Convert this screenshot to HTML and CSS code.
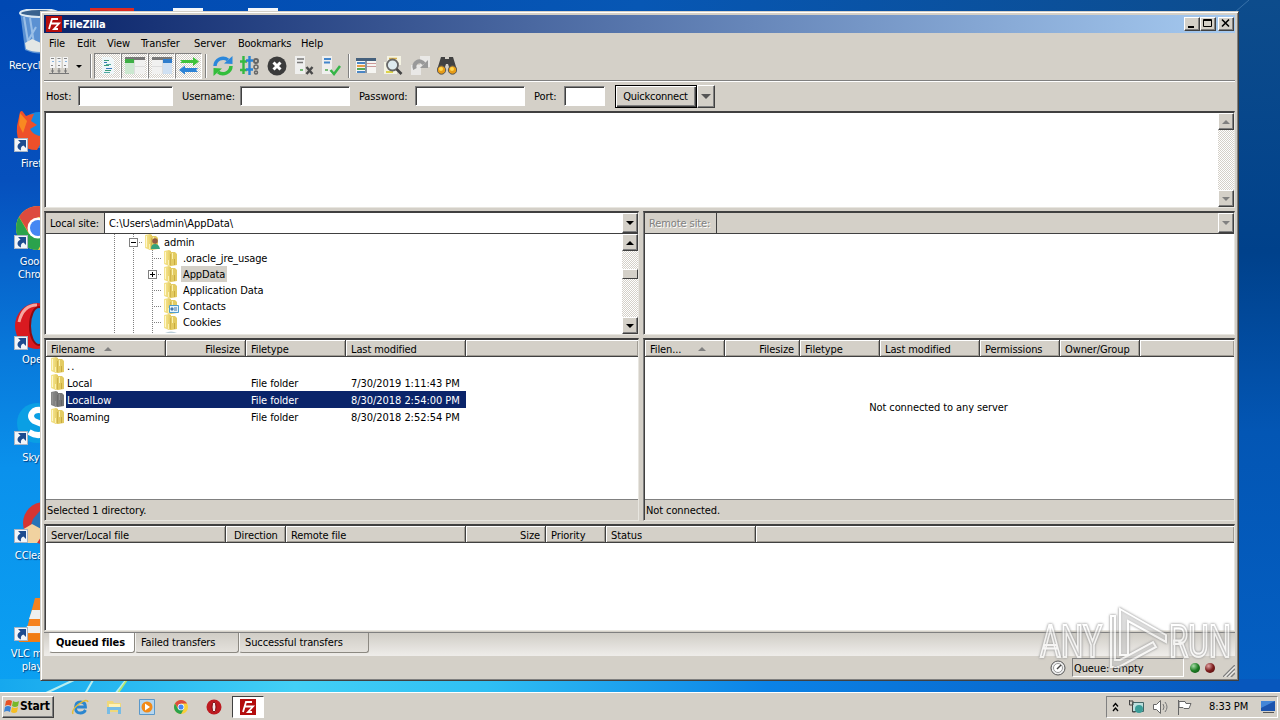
FILE: index.html
```html
<!DOCTYPE html>
<html lang="en">

<head>
  <meta charset="utf-8">
  <title>FileZilla</title>
  <link rel="stylesheet" href="styles.css">
</head>

<body>

<svg class="defs">
  <linearGradient id="fold" x1="0" x2="1">
    <stop offset="0" stop-color="#f6e693"/>
    <stop offset=".5" stop-color="#efdb7c"/>
    <stop offset="1" stop-color="#e0c65a"/>
  </linearGradient>
  <symbol id="folder" viewBox="0 0 16 16">
    <path d="M1 1l5-1 2 1v14l-2 1-5-2z" fill="url(#fold)"/>
    <path d="M7 2h5l2 2v11l-6 1H7z" fill="#e3cb62"/>
    <path d="M2.500 2v11" stroke="#fff7cd"/>
    <path d="M7.500 4v11" stroke="#d0b44c"/>
    <path d="M9.500 3v6M5.500 10v5" stroke="#fbf1b2"/>
    <path d="M11.500 9v6" stroke="#c9ab40"/>
  </symbol>
  <symbol id="fz" viewBox="0 0 16 16">
    <path d="M0 0h16v16H0z" fill="#b30d0d"/>
    <path d="M3 13L6 3h6M5 7.500h4M9 7.500h4l-5 5.500h4" fill="none" stroke="#fff" stroke-width="1.800"/>
  </symbol>
  <symbol id="chrome" viewBox="0 0 44 44">
    <circle cx="22" cy="22" r="22" fill="#f9cf3a"/>
    <path d="M3 11a22 22 0 0 1 38 0H22L13 27z" fill="#dd4b3e"/>
    <path d="M3 11a22 22 0 0 0 19 33l9-16H13z" fill="#2ba24c"/>
    <circle cx="22" cy="22" r="10.500" fill="#fff"/>
    <circle cx="22" cy="22" r="8" fill="#4587f3"/>
  </symbol>
  <symbol id="shortcut" viewBox="0 0 14 14">
    <path d="M0 0h14v14H0z" fill="#f2f5f9"/>
    <path d="M0 .5h14M.5 0v14M13.500 0v14M0 13.500h14" stroke="#a9b4c4"/>
    <path d="M4 2h8v8L9.500 7.500C7 8.500 6.500 10 7 12.500 3 11 2 7 6.500 4.500z" fill="#1d4b8f"/>
  </symbol>
</svg>

<div class="desktop">
  <svg class="wallpaper" viewBox="0 0 1280 720">
    <path d="M44 694l30-14M85 694l8-14M115 694l11-14" stroke="#b6edf0" stroke-width="2"/>
    <path d="M118 693l9-13" stroke="#b6e86a" stroke-width="1.500"/>
    <path d="M1235 12l14-12" stroke="#3972a9"/>
    <path d="M90 8h44v4H90z" fill="#dc2b22"/>
    <path d="M173 8h30v4h-30zM248 8h30v4h-30z" fill="#f4f6fa"/>
  </svg>

  <div class="shortcut bin">
    <svg width="44" height="46" viewBox="0 0 44 46">
      <path d="M1 2l5 39q16 7 28 0l5-39z" fill="#7aa9dc" opacity=".75"/>
      <path d="M5 8l5 31M11 9l5 32M17 18l-8 14" stroke="#c5dff5" stroke-width="2" opacity=".6"/>
      <ellipse cx="20" cy="4" rx="19" ry="4" fill="#39628f" stroke="#dce9f3" stroke-width="2"/>
      <path d="M6 34l7-4 9 4v9q-10 0-15-3z" fill="#e3e7e5"/>
    </svg>
    <span>Recycle Bin</span>
  </div>
  <div class="shortcut firefox">
    <svg width="46" height="46" viewBox="0 0 46 46">
      <circle cx="24" cy="22" r="18" fill="#1587df"/>
      <path d="M5 4q2-2 3 0l3 4q4-2 8-2l-3 7 6 4-7 4q4 8 15 7l-8 14Q0 42 2 18z" fill="#ee502a"/>
      <path d="M5 5l7 8-4 12-4-8z" fill="#f98921"/>
    </svg>
    <svg class="link"><use href="#shortcut"/></svg>
    <span>Firefox</span>
  </div>
  <div class="shortcut google">
    <svg width="46" height="46" viewBox="-1 -1 46 46"><use href="#chrome" width="44" height="44"/></svg>
    <svg class="link"><use href="#shortcut"/></svg>
    <span>Google<br>Chrome</span>
  </div>
  <div class="shortcut opera">
    <svg width="46" height="48" viewBox="0 0 46 48">
      <ellipse cx="22" cy="24" rx="22" ry="23" fill="#d91a20"/>
      <path d="M4 20Q8 3 22 3" fill="none" stroke="#f5a7a0" stroke-width="3"/>
      <ellipse cx="24" cy="24" rx="9" ry="19" fill="#118cdf" stroke="#8d0a10" stroke-width="2"/>
    </svg>
    <svg class="link"><use href="#shortcut"/></svg>
    <span>Opera</span>
  </div>
  <div class="shortcut skype">
    <svg width="46" height="46" viewBox="0 0 46 46">
      <circle cx="22" cy="22" r="20" fill="#0a9fe4"/>
      <path d="M33 12q-8-5-14-2-6 5 0 10l10 4q6 5-1 9-6 3-14-2" fill="none" stroke="#fff" stroke-width="6"/>
    </svg>
    <svg class="link"><use href="#shortcut"/></svg>
    <span>Skype</span>
  </div>
  <div class="shortcut ccleaner">
    <svg width="46" height="46" viewBox="0 0 46 46">
      <circle cx="29" cy="24" r="21" fill="#d53532"/>
      <path d="M18 20l12-14v26l-14-6z" fill="#2873b7"/>
      <path d="M2 34l15-9 13 7-8 12H8z" fill="#f1d2a0"/>
    </svg>
    <svg class="link"><use href="#shortcut"/></svg>
    <span>CCleaner</span>
  </div>
  <div class="shortcut vlc">
    <svg width="46" height="46" viewBox="0 0 46 46">
      <path d="M20 1h6l13 41H9z" fill="#f5821f"/>
      <path d="M17 13h12l3 9H14zM12 29h22l2 7H9z" fill="#eef0f0"/>
      <path d="M4 37h38v8H4z" fill="#f07c14"/>
    </svg>
    <svg class="link"><use href="#shortcut"/></svg>
    <span>VLC media<br>player</span>
  </div>

  <div class="window">
    <div class="titlebar">
      <svg width="16" height="16"><use href="#fz"/></svg>
      <span class="caption">FileZilla</span>
      <div class="win-btn"><svg width="14" height="12"><path d="M3 8h6v2H3z"/></svg></div>
      <div class="win-btn"><svg width="14" height="12"><path d="M2.500 1.500h8v7h-8zM2 2.500h9" fill="none" stroke="#000"/></svg></div>
      <div class="win-btn close"><svg width="14" height="12"><path d="M3 1.500l7 7M10 1.500l-7 7" stroke="#000" stroke-width="1.600"/></svg></div>
    </div>

    <div class="menu">
      <span class="m-file">File</span>
      <span class="m-edit">Edit</span>
      <span class="m-view">View</span>
      <span class="m-transfer">Transfer</span>
      <span class="m-server">Server</span>
      <span class="m-book">Bookmarks</span>
      <span class="m-help">Help</span>
    </div>

    <div class="toolbar">
      <div class="tool">
        <svg width="20" height="20">
          <path d="M1 1h5v11H1zM7.500 1h5v11h-5zM14 1h5v11h-5z" fill="#f4f4f4"/>
          <path d="M2 2.500h3M8.500 2.500h3M15 2.500h3M2 9.500h2M9 9.500h2M15 9.500h2" stroke="#888"/>
          <path d="M3 5.500h2M9.500 5.500h2M16 5.500h2" stroke="#8ab5dc"/>
          <path d="M3.500 12v5M10 12v5M16.500 12v5M0 17.500h20M2 15h3M8.500 15h3M15 15h3" stroke="#777"/>
        </svg>
      </div>
      <i class="drop"></i>
      <i class="sep"></i>
      <div class="tool on">
        <svg width="20" height="20"><path d="M4 1h9l3 3v14H4z" fill="#eef6f8"/><path d="M6 4.500h5M6 9.500h5M7 14.500h6" stroke="#3c9b78"/><path d="M6 6.500h3M8 12.500h6" stroke="#3977b9"/><path d="M8 8.500h5M6 16.500h6" stroke="#50a8a0"/></svg>
      </div>
      <div class="tool on">
        <svg width="20" height="20"><path d="M0 1h20v17H0z" fill="#f1f1f0"/><path d="M0 1h20v3H0z" fill="#777"/><path d="M0 3h9v4H0z" fill="#3daf45"/><path d="M0 7h9v11H0z" fill="#cbe8cf"/><path d="M9.500 4v14M9 10.500h11" stroke="#ddd"/></svg>
      </div>
      <div class="tool on">
        <svg width="20" height="20"><path d="M0 1h20v17H0z" fill="#f1f1f0"/><path d="M0 1h20v3H0z" fill="#777"/><path d="M11 3h9v4h-9z" fill="#2f7dcc"/><path d="M11 7h9v11h-9z" fill="#cfe0f2"/><path d="M10.500 4v14M0 10.500h11" stroke="#ddd"/></svg>
      </div>
      <div class="tool on">
        <svg width="20" height="20"><path d="M1 4h13V1l6 4.500-6 4.500V7H1l2-1.500z" fill="#3fc33b"/><path d="M19 12H6V9.500L0 14l6 4.500V16h13l-2-2z" fill="#2c83d6"/></svg>
      </div>
      <i class="sep after-toggles"></i>
      <div class="tool">
        <svg width="20" height="20"><path d="M2 10a8 8 0 0 1 13-6" fill="none" stroke="#2b87db" stroke-width="3.500"/><path d="M11 7.500L19.500 8V0z" fill="#2b87db"/><path d="M18 10a8 8 0 0 1-13 6" fill="none" stroke="#34be3c" stroke-width="3.500"/><path d="M9 12.500L.5 12v8z" fill="#34be3c"/></svg>
      </div>
      <div class="tool">
        <svg width="20" height="20"><path d="M3.500 0v18M0 5.500h7M0 14h7" stroke="#35b942" stroke-width="2.400"/><path d="M9.500 0v19M6 4.500h7M6 13.500h7" stroke="#2984d5" stroke-width="2.400"/><circle cx="16" cy="5" r="2" fill="none" stroke="#666" stroke-width="2"/><circle cx="16" cy="11" r="2" fill="none" stroke="#666" stroke-width="1.500"/><circle cx="16" cy="16.500" r="1.500" fill="none" stroke="#666" stroke-width="1.500"/></svg>
      </div>
      <div class="tool">
        <svg width="20" height="20"><circle cx="10" cy="10" r="9.500" fill="#3b3b3b"/><path d="M6.500 6.500l7 7M13.500 6.500l-7 7" stroke="#fff" stroke-width="3"/></svg>
      </div>
      <div class="tool">
        <svg width="20" height="20"><path d="M1 0h10v18H1z" fill="#efefee"/><path d="M3 3h7M3 6.500h6" stroke="#777" stroke-width="1.500"/><path d="M6 14h3" stroke="#7b7" stroke-width="2"/><path d="M12.500 11l6 7M18.500 11l-6 7" stroke="#4a4a4a" stroke-width="2.400"/></svg>
      </div>
      <div class="tool">
        <svg width="20" height="20"><path d="M1 0h10v18H1z" fill="#efefee"/><path d="M3 3h7M3 6.500h6" stroke="#4386cc" stroke-width="1.800"/><path d="M4 14h3" stroke="#7b7" stroke-width="2"/><path d="M9.500 14l3.500 4 6-8" fill="none" stroke="#35b548" stroke-width="2.500"/></svg>
      </div>
      <i class="sep before-filters"></i>
      <div class="tool">
        <svg width="20" height="20"><path d="M0 3h20v14H0z" fill="#f5f5f2"/><path d="M0 2h20v3H0z" fill="#45607c"/><path d="M1 7h8M1 16h8" stroke="#4a86c5" stroke-width="2"/><path d="M1 10h8" stroke="#e69c46" stroke-width="2"/><path d="M1 13h8" stroke="#54aa5a" stroke-width="2"/><path d="M11 7.500h9M11 10.500h9" stroke="#c99"/><path d="M10 5v12" stroke="#61758a" stroke-width="1.500"/></svg>
      </div>
      <div class="tool">
        <svg width="20" height="20"><path d="M4 0h14v9H4zM1 6h13v12H1z" fill="#f4f3e3"/><path d="M3 16h7" stroke="#ddd34b" stroke-width="2"/><path d="M6 2.500h8" stroke="#d8b14d" stroke-width="1.500"/><circle cx="9.500" cy="9" r="5.500" fill="#deebef" stroke="#666" stroke-width="1.800"/><path d="M13.500 13l5 5" stroke="#444" stroke-width="2.600"/></svg>
      </div>
      <div class="tool">
        <svg width="20" height="20"><path d="M10 0h10v11H10zM1 9h10v10H1z" fill="#e9e8e6"/><path d="M5 13a5 5 0 0 1 9-5" fill="none" stroke="#999" stroke-width="4"/><path d="M10 12h8V4z" fill="#999"/></svg>
      </div>
      <div class="tool">
        <svg width="20" height="20"><path d="M4 1h4v2h4V1h4l4 13h-7l-2-6H9l-2 6H0z" fill="#414141"/><circle cx="4.500" cy="14" r="4.200" fill="#e69b16" stroke="#555"/><circle cx="15.500" cy="14" r="4.200" fill="#e69b16" stroke="#555"/><circle cx="4" cy="13" r="2" fill="#ffd650"/><circle cx="15" cy="13" r="2" fill="#ffd650"/></svg>
      </div>
    </div>

    <div class="quickbar">
      <label class="q-host">Host:</label><i class="field"></i>
      <label class="q-user">Username:</label><i class="field wide"></i>
      <label class="q-pass">Password:</label><i class="field wide"></i>
      <label class="q-port">Port:</label><i class="field port"></i>
      <div class="quick">Quickconnect</div>
      <div class="quick-drop"><i class="down gray"></i></div>
    </div>

    <div class="log sunken">
      <div class="scroll">
        <div class="btn"><i class="up gray"></i></div>
        <div class="track"></div>
        <div class="btn"><i class="down gray"></i></div>
      </div>
    </div>

    <div class="split sites">
      <div class="pane local sunken">
        <div class="site">
          <span class="site-label">Local site:</span>
          <span class="path">C:\Users\admin\AppData\</span>
          <div class="btn"><i class="down"></i></div>
        </div>
        <div class="tree-box">
          <ul class="tree">
            <li><i class="guide"></i><i class="guide dots"><b class="box"></b></i><svg class="folder"><use href="#folder"/><circle cx="11" cy="7" r="2.800" fill="#935b43"/><path d="M7 15q0-5 4-5t5 5z" fill="#37a27c"/></svg><span>admin</span></li>
            <li><i class="guide"></i><i class="guide"></i><i class="guide dots"></i><svg class="folder"><use href="#folder"/></svg><span>.oracle_jre_usage</span></li>
            <li><i class="guide"></i><i class="guide"></i><i class="guide dots"><b class="box plus"></b></i><svg class="folder"><use href="#folder"/></svg><span class="picked">AppData</span></li>
            <li><i class="guide"></i><i class="guide"></i><i class="guide dots"></i><svg class="folder"><use href="#folder"/></svg><span>Application Data</span></li>
            <li><i class="guide"></i><i class="guide"></i><i class="guide dots"></i><svg class="folder"><use href="#folder"/><path d="M6.500 7.500h9v7h-9z" fill="#e6f3fb" stroke="#4d9dce"/><path d="M8 10h2v2H8zM11 10h3M11 12h3" fill="#4579ac" stroke="#4579ac"/></svg><span>Contacts</span></li>
            <li><i class="guide"></i><i class="guide"></i><i class="guide dots"></i><svg class="folder"><use href="#folder"/></svg><span>Cookies</span></li>
            <li><i class="guide"></i><i class="guide"></i><i class="guide"></i><svg class="folder"><path d="M2 3q6-3 12 0z" fill="#b9cdd8"/></svg></li>
          </ul>
          <div class="scroll">
            <div class="btn"><i class="up"></i></div>
            <div class="track"><div class="thumb"></div></div>
            <div class="btn"><i class="down"></i></div>
          </div>
        </div>
      </div>
      <div class="pane remote sunken">
        <div class="site off">
          <span class="site-label">Remote site:</span>
          <span class="path"></span>
          <div class="btn"><i class="down gray"></i></div>
        </div>
      </div>
    </div>

    <div class="split lists">
      <div class="pane local sunken">
        <div class="head local-cols">
          <span>Filename<i class="up sort"></i></span>
          <span class="num">Filesize</span>
          <span>Filetype</span>
          <span>Last modified</span>
          <span class="rest"></span>
        </div>
        <div class="rows">
          <div class="row local-cols"><span class="name"><svg class="folder"><use href="#folder"/></svg><em class="parent">..</em></span></div>
          <div class="row local-cols"><span class="name"><svg class="folder"><use href="#folder"/></svg><em>Local</em></span><span></span><span>File folder</span><span class="date">7/30/2019 1:11:43 PM</span></div>
          <div class="row local-cols selected"><span class="name"><svg class="folder"><use href="#folder"/></svg><em>LocalLow</em></span><span></span><span>File folder</span><span class="date">8/30/2018 2:54:00 PM</span></div>
          <div class="row local-cols"><span class="name"><svg class="folder"><use href="#folder"/></svg><em>Roaming</em></span><span></span><span>File folder</span><span class="date">8/30/2018 2:52:54 PM</span></div>
        </div>
        <div class="pane-status">Selected 1 directory.</div>
      </div>
      <div class="pane remote sunken">
        <div class="head remote-cols">
          <span>Filen...<i class="up sort"></i></span>
          <span class="num">Filesize</span>
          <span>Filetype</span>
          <span>Last modified</span>
          <span>Permissions</span>
          <span>Owner/Group</span>
          <span class="rest"></span>
        </div>
        <div class="rows empty"><span>Not connected to any server</span></div>
        <div class="pane-status">Not connected.</div>
      </div>
    </div>

    <div class="queue sunken">
      <div class="head queue-cols">
        <span>Server/Local file</span>
        <span class="dir">Direction</span>
        <span>Remote file</span>
        <span class="num">Size</span>
        <span>Priority</span>
        <span>Status</span>
        <span class="rest"></span>
      </div>
    </div>

    <div class="tabs">
      <div class="tab active"><span>Queued files</span></div>
      <div class="tab failed"><span>Failed transfers</span></div>
      <div class="tab success"><span>Successful transfers</span></div>
    </div>

    <div class="statusbar">
      <svg width="16" height="16"><circle cx="8" cy="8" r="7" fill="#eee" stroke="#555"/><circle cx="8" cy="8" r="4.500" fill="#fff" stroke="#999"/><path d="M7 9l4-4" stroke="#444" stroke-width="1.500"/></svg>
      <div class="queue-size">Queue: empty</div>
      <i class="led green"></i>
      <i class="led red"></i>
      <svg class="grip" width="12" height="12"><path d="M0 12L12 0M4 12l8-8M8 12l4-4" stroke="#808080" stroke-width="1.500"/><path d="M1.500 12L12 1.500M5.500 12L12 5.500" stroke="#fff"/></svg>
    </div>
  </div>

  <svg class="watermark" width="204" height="64" viewBox="0 0 204 64">
    <g fill="#fff" fill-opacity=".35" stroke="#fff" stroke-width="2">
      <text x="1" y="51" textLength="62" lengthAdjust="spacingAndGlyphs">ANY</text>
      <text x="130" y="51" textLength="62" lengthAdjust="spacingAndGlyphs">RUN</text>
      <path d="M81 3l46 26v7l-38-21v34h-8z"/>
      <path d="M76 10h-4v51h8l37-20-3-5-33 18h-5z"/>
    </g>
  </svg>

  <div class="taskbar">
    <div class="start">
      <svg width="16" height="15"><path d="M2 2q3-2 6 0L7 7Q4 5 1 7z" fill="#e75125"/><path d="M9 2q3 2 6 0l-1 5q-3 2-6 0z" fill="#78b82b"/><path d="M1 8q3-2 6 0l-1 5q-3-2-6 0z" fill="#3b83d5"/><path d="M8 8q3 2 6 0l-1 5q-3 2-6 0z" fill="#f6be23"/></svg>
      Start
    </div>
    <div class="pinned">
      <svg width="18" height="18"><path d="M14.500 12Q13 15 9.500 15q-5 0-5-5.500t5-5.500 5 5H5" fill="none" stroke="#2b86cf" stroke-width="2.800"/><path d="M2 16Q0 12 8 6t9-2" fill="none" stroke="#e5bd37" stroke-width="1.500"/></svg>
      <svg width="18" height="18"><path d="M2 3h6l1 2h7v9H2z" fill="#efd87b"/><path d="M4 6h11v6H4z" fill="#fff2b5"/><path d="M2 9h14v7h-3v-4H5v4H2z" fill="#77bce5"/></svg>
      <svg width="18" height="18"><path d="M1.500 1.500h15v15h-15z" fill="#b6d6ef" stroke="#5a98ca"/><circle cx="9" cy="9" r="5.500" fill="#f28a18"/><path d="M7 5.500l5 3.500-5 3.500z" fill="#fff"/></svg>
      <svg width="18" height="18"><use href="#chrome" x="2" y="2" width="14" height="14"/></svg>
      <svg width="18" height="18"><circle cx="9" cy="9" r="7.500" fill="#bd1a20"/><ellipse cx="9" cy="9" rx="2" ry="5" fill="#f5e8e8" stroke="#7a080c"/></svg>
    </div>
    <div class="task"><svg width="16" height="16"><use href="#fz"/></svg></div>
    <div class="tray">
      <svg class="chev" width="8" height="10"><path d="M1 4.500l2.500-3L6 4.500M1 9l2.500-3L6 9" fill="none" stroke="#000" stroke-width="1.300"/></svg>
      <svg class="net" width="18" height="18"><path d="M4.500 4.500h11v9h-11z" fill="#bce0df" stroke="#466"/><circle cx="11" cy="11" r="4" fill="#3a9d98"/><path d="M1 3h4v4M1.500 2v5h3v7h3" fill="none" stroke="#444"/></svg>
      <svg class="vol" width="18" height="18"><path d="M1.500 6.500h3l4-4v13l-4-4h-3z" fill="#fff" stroke="#666"/><path d="M11 6q2 3 0 6M13 4q4 5 0 10" fill="none" stroke="#777"/></svg>
      <svg class="flag" width="18" height="18"><path d="M2.500 2v15M3 3.500h6l1 2h5l-2 5H8l-1-1H3z" fill="#fff" stroke="#666"/></svg>
      <span class="clock">8:33 PM</span>
      <svg class="show" width="16" height="16"><path d="M1 2h14v10H1z" fill="#1b54ae"/><path d="M1 2h14L1 9z" fill="#4386d8"/><path d="M3 13h11v1H3z" fill="#555"/></svg>
    </div>
  </div>
</div>

</body>

</html>
```
FILE: styles.css
```css
body {
  margin: 0;
  font: 11px/13px "DejaVu Sans Condensed", "DejaVu Sans", sans-serif;
  font-stretch: condensed;
  letter-spacing: -0.1px;
  color: #000;
}

svg {
  display: block;
  flex: none;
}

i, em {
  font-style: normal;
}

.defs {
  position: absolute;
  width: 0;
  height: 0;
}

.desktop {
  position: relative;
  width: 1280px;
  height: 720px;
  overflow: hidden;
  background:
    linear-gradient(90deg, #16a8ee, #43d0f5 23%, #2fbff4 38%, #0b82e6 60%, #0757bd 97%) 0 100% / 100% 41px no-repeat,
    linear-gradient(#0d4c8c, #00418b 35%, #0356b4 60%, #0460c5) 100% 0 / 60px 100% no-repeat,
    linear-gradient(90deg, #0048b3, #0757b4 50%, #0d4c8c) 0 0 / 100% 12px no-repeat,
    linear-gradient(#0048b3, #0650bd 25%, #0877d9 48%, #0a91ec 65%, #0ba3f3);
}

.wallpaper {
  position: absolute;
  left: 0;
  top: 0;
  width: 1280px;
  height: 720px;
}

/* desktop shortcuts */

.shortcut {
  position: absolute;
  left: 0;
  width: 74px;
  color: #fff;
  text-align: center;
  text-shadow: 1px 1px 1px #033a7a;
}

.shortcut > svg:first-child {
  margin-left: 15px;
}

.shortcut span {
  display: block;
  margin-top: 3px;
  white-space: nowrap;
}

.shortcut .link {
  position: absolute;
  left: 14px;
  top: 30px;
  width: 14px;
  height: 14px;
}

.bin {
  top: 9px;
}

.bin > svg:first-child {
  margin-left: 19px;
}

.bin span {
  margin-top: 4px;
}

.firefox {
  top: 108px;
}

.google {
  top: 205px;
}

.google span {
  margin-top: 4px;
}

.opera {
  top: 302px;
}

.opera .link {
  top: 34px;
}

.skype {
  top: 401px;
}

.ccleaner {
  top: 499px;
}

.vlc {
  top: 597px;
}

.skype span, .ccleaner span, .vlc span {
  margin-top: 4px;
}

/* window */

.window {
  position: absolute;
  left: 40px;
  top: 11px;
  width: 1191px;
  height: 664px;
  padding: 3px 3px 1px;
  display: flex;
  flex-direction: column;
  background: #d4d0c8;
  border: 1px solid #d4d0c8;
  border-right-color: #404040;
  border-bottom-color: #404040;
  box-shadow: inset 1px 1px #fff, inset -1px -1px #808080;
}

.titlebar {
  display: flex;
  align-items: center;
  height: 18px;
  padding: 0 1px 0 2px;
  background: linear-gradient(90deg, #0a246a, #a6caf0);
}

.caption {
  flex: 1;
  margin-left: 1px;
  color: #fff;
  font-weight: bold;
  letter-spacing: -0.2px;
}

.win-btn {
  width: 14px;
  height: 12px;
  background: #d4d0c8;
  border: 1px solid #fff;
  border-right-color: #404040;
  border-bottom-color: #404040;
  box-shadow: inset -1px -1px #808080;
}

.win-btn.close {
  margin-left: 2px;
}

.menu {
  display: flex;
  align-items: center;
  height: 17px;
  padding: 2px 0 0 5px;
}

.menu span {
  white-space: nowrap;
}

.m-file {
  width: 28px;
}

.m-edit {
  width: 30px;
}

.m-view {
  width: 34px;
}

.m-transfer {
  width: 53px;
}

.m-server {
  width: 44px;
}

.m-book {
  width: 63px;
  letter-spacing: -0.25px;
}

.toolbar {
  display: flex;
  align-items: center;
  height: 28px;
  padding-left: 1px;
  border-bottom: 1px solid #808080;
  box-shadow: 0 1px #fff;
}

.tool {
  width: 27px;
  height: 26px;
  display: flex;
  align-items: center;
  justify-content: center;
}

.tool.on {
  width: 25px;
  height: 24px;
  border: 1px solid #808080;
  border-right-color: #fff;
  border-bottom-color: #fff;
  background: repeating-conic-gradient(#fff 0 25%, #d4d0c8 0 50%) 0 0 / 2px 2px;
}

.drop {
  margin: 0 6px 0 4px;
  border: 3px solid transparent;
  border-top-color: #000;
  border-bottom: 0;
}

.sep {
  width: 1px;
  height: 24px;
  margin: 0 3px 0 2px;
  background: #808080;
  box-shadow: 1px 0 #fff;
}

.sep.after-toggles {
  margin-left: 3px;
}

.sep.before-filters {
  margin-left: 4px;
}

.quickbar {
  display: flex;
  align-items: center;
  height: 30px;
  padding-left: 2px;
}

.field {
  box-sizing: border-box;
  width: 95px;
  height: 20px;
  background: #fff;
  border: 1px solid #808080;
  border-right-color: #fff;
  border-bottom-color: #fff;
  box-shadow: inset 1px 1px #404040;
}

.field.wide {
  width: 110px;
}

.field.port {
  width: 41px;
}

.q-host {
  width: 32px;
}

.q-user {
  width: 58px;
  margin-left: 9px;
}

.q-pass {
  width: 56px;
  margin-left: 9px;
}

.q-port {
  width: 30px;
  margin-left: 9px;
}

.quick {
  box-sizing: border-box;
  width: 82px;
  height: 23px;
  margin-left: 10px;
  padding-right: 1px;
  line-height: 21px;
  text-align: center;
  letter-spacing: -0.25px;
  border: 1px solid #000;
  box-shadow: inset 1px 1px #fff, inset -1px -1px #404040, inset -2px -2px #808080;
}

.quick-drop {
  box-sizing: border-box;
  width: 18px;
  height: 23px;
  display: flex;
  align-items: center;
  justify-content: center;
  border: 1px solid #fff;
  border-right-color: #404040;
  border-bottom-color: #404040;
  box-shadow: inset -1px -1px #808080;
}

.up, .down {
  border: 4px solid transparent;
}

.up {
  border-top: 0;
  border-bottom-color: #000;
}

.down {
  border-bottom: 0;
  border-top-color: #000;
}

.down.gray {
  border-top-color: #808080;
}

.up.gray, .up.sort {
  border-bottom-color: #808080;
}

.quick-drop .down {
  border-width: 5px 5px 0;
  border-top-color: #555;
}

.sunken {
  box-sizing: border-box;
  background: #fff;
  border: 2px solid #404040;
  border-left-width: 1px;
  border-left-color: #808080;
  border-right: 1px solid #e8e6e0;
  border-bottom: 1px solid #e8e6e0;
  box-shadow: inset 1px 0 #404040;
  padding-left: 1px;
}

.scroll {
  display: flex;
  flex-direction: column;
  width: 16px;
}

.btn {
  box-sizing: border-box;
  flex: none;
  width: 16px;
  height: 17px;
  display: flex;
  align-items: center;
  justify-content: center;
  background: #d4d0c8;
  border: 1px solid #fff;
  border-right-color: #404040;
  border-bottom-color: #404040;
  box-shadow: inset -1px -1px #808080;
}

.track {
  flex: 1;
  background: repeating-conic-gradient(#fff 0 25%, #d4d0c8 0 50%) 0 0 / 2px 2px;
}

.thumb {
  height: 8px;
  margin-top: 18px;
  background: #d4d0c8;
  border: 1px solid #fff;
  border-right-color: #404040;
  border-bottom-color: #404040;
}

.log {
  display: flex;
  justify-content: flex-end;
  height: 97px;
}

.split {
  display: flex;
  gap: 4px;
}

.pane {
  display: flex;
  flex-direction: column;
  height: 100%;
}

.pane.local {
  width: 595px;
}

.pane.remote {
  flex: 1;
}

.sites {
  height: 124px;
  margin-top: 3px;
}

.site {
  display: flex;
  height: 20px;
  border-bottom: 1px solid #404040;
}

.site-label {
  box-sizing: border-box;
  width: 59px;
  padding-left: 4px;
  line-height: 21px;
  background: #d4d0c8;
  border-right: 1px solid #404040;
}

.path {
  flex: 1;
  padding-left: 4px;
  line-height: 21px;
  letter-spacing: -0.05px;
}

.site .btn {
  height: 20px;
}

.off {
  background: #d4d0c8;
}

.off .site-label {
  width: 72px;
  color: #808080;
  text-shadow: 1px 1px #fff;
}

.tree-box {
  display: flex;
  flex: 1;
  min-height: 0;
}

.tree {
  flex: 1;
  margin: 0;
  padding: 0 0 0 59px;
  overflow: hidden;
  list-style: none;
}

.tree li {
  display: flex;
  height: 16px;
}

.tree span {
  margin-left: 2px;
  padding: 0 2px;
  line-height: 17px;
}

.picked {
  background: #d4d0c8;
}

.guide {
  position: relative;
  width: 19px;
  height: 16px;
  background: repeating-linear-gradient(#808080 0 1px, #fff 1px 2px) 9px 0 / 1px 16px no-repeat;
}

.guide.dots {
  background:
    repeating-linear-gradient(90deg, #808080 0 1px, #fff 1px 2px) 9px 8px / 10px 1px no-repeat,
    repeating-linear-gradient(#808080 0 1px, #fff 1px 2px) 9px 0 / 1px 16px no-repeat;
}

/* expander box sits over the dotted guides */
.box {
  position: absolute;
  left: 5px;
  top: 4px;
  width: 7px;
  height: 7px;
  border: 1px solid #808080;
  background: linear-gradient(#000, #000) 1px 3px / 5px 1px no-repeat, #fff;
}

.box.plus {
  background:
    linear-gradient(#000, #000) 1px 3px / 5px 1px no-repeat,
    linear-gradient(#000, #000) 3px 1px / 1px 5px no-repeat,
    #fff;
}

.folder {
  width: 16px;
  height: 16px;
}

.tree .folder {
  margin-left: 1px;
}

.lists {
  height: 183px;
  margin-top: 3px;
}

.head, .row {
  display: grid;
}

.local-cols {
  grid-template-columns: 120px 80px 100px 120px 1fr;
}

.remote-cols {
  grid-template-columns: 80px 75px 80px 100px 80px 80px 1fr;
}

.queue-cols {
  grid-template-columns: 180px 60px 180px 80px 60px 150px 1fr;
}

.head {
  flex: none;
  height: 17px;
  background: #d4d0c8;
}

.head span {
  display: flex;
  align-items: center;
  padding: 2px 5px 0;
  white-space: nowrap;
  border-bottom: 1px solid #404040;
  border-right: 1px solid #404040;
  box-shadow: inset 1px 1px #fff, inset -1px -1px #a09c94;
}

.head .rest {
  border-right: 0;
}

.head .num {
  justify-content: flex-end;
}

.head .dir {
  padding-left: 8px;
}

.sort {
  margin-left: 9px;
}

.remote-cols .sort {
  margin-left: 17px;
}

.rows {
  flex: 1;
}

.row {
  height: 17px;
  line-height: 19px;
}

.row span {
  padding-left: 5px;
  white-space: nowrap;
}

.row .date {
  letter-spacing: -0.05px;
}

.row .name {
  display: flex;
  padding-left: 4px;
}

.name em {
  flex: 1;
  padding-left: 1px;
}

.name .parent {
  letter-spacing: 1px;
}

.selected {
  color: #fff;
  background: linear-gradient(#0a246a, #0a246a) 20px 0 / 400px 17px no-repeat;
}

.selected .folder {
  filter: grayscale(1) brightness(0.6);
}

.empty {
  padding-top: 44px;
  padding-right: 2px;
  text-align: center;
}

.pane-status {
  height: 20px;
  padding-left: 1px;
  line-height: 22px;
  background: #d4d0c8;
  border-top: 1px solid #808080;
}

.queue {
  height: 107px;
  margin-top: 3px;
}

.tabs {
  display: flex;
  height: 23px;
  padding-left: 5px;
  background: linear-gradient(#d0cdc6, #efedea);
  border-top: 1px solid #808080;
  margin-top: 1px;
}

.tab {
  box-sizing: border-box;
  height: 20px;
  padding-left: 5px;
  line-height: 19px;
  background: linear-gradient(#d0cdc6, #e4e1dc);
  border: 1px solid #8c8982;
  border-top: 0;
  border-left-color: #f5f4f2;
  border-radius: 0 0 3px 3px;
}

.tab.active {
  width: 86px;
  padding-left: 6px;
  background: #fff;
  font-weight: bold;
}

.tab.failed {
  width: 104px;
}

.tab.success {
  width: 130px;
}

.statusbar {
  display: flex;
  align-items: center;
  flex: 1;
  padding-left: 1006px;
}

.queue-size {
  box-sizing: border-box;
  width: 114px;
  height: 19px;
  margin: 0 6px 0 6px;
  padding-left: 1px;
  line-height: 19px;
  border: 1px solid #808080;
  border-right-color: #fff;
  border-bottom-color: #fff;
}

.led {
  width: 10px;
  height: 10px;
  margin-right: 5px;
  border-radius: 50%;
}

.green {
  background: radial-gradient(circle at 35% 30%, #a6dca6, #1d7c24 50%, #0a4a10);
}

.red {
  background: radial-gradient(circle at 35% 30%, #e2a5a5, #7c1d1d 50%, #4a0a0a);
}

.grip {
  margin: 7px 0 0 3px;
}

.watermark {
  position: absolute;
  left: 1039px;
  top: 606px;
  opacity: 0.7;
  filter: drop-shadow(0 0 1px #888) drop-shadow(0 0 1px #aaa);
  font: 44px "Roboto", sans-serif;
  letter-spacing: 0;
}

/* taskbar */

.taskbar {
  position: absolute;
  left: 0;
  bottom: 0;
  width: 1280px;
  height: 27px;
  display: flex;
  align-items: center;
  background: #d4d0c8;
  border-top: 1px solid #fff;
}

.start {
  box-sizing: border-box;
  width: 52px;
  height: 22px;
  margin-left: 2px;
  padding-left: 1px;
  display: flex;
  align-items: center;
  font-size: 12px;
  font-weight: bold;
  letter-spacing: -0.2px;
  border: 1px solid #fff;
  border-right-color: #404040;
  border-bottom-color: #404040;
  box-shadow: inset -1px -1px #808080;
}

.pinned {
  display: flex;
  gap: 15.6px;
  margin-left: 17px;
}

.task {
  box-sizing: border-box;
  width: 32px;
  height: 22px;
  margin-left: 9px;
  display: flex;
  align-items: center;
  justify-content: center;
  background: #fff;
  border: 1px solid #404040;
  border-right-color: #fff;
  border-bottom-color: #fff;
}

.tray {
  box-sizing: border-box;
  width: 172px;
  height: 22px;
  margin-left: auto;
  margin-right: 2px;
  display: flex;
  align-items: center;
  border: 1px solid #808080;
  border-right-color: #fff;
  border-bottom-color: #fff;
}

.chev {
  margin-left: 5px;
}

.net {
  margin-left: 8px;
}

.vol, .flag {
  margin-left: 6px;
}

.clock {
  width: 46px;
  margin-left: 15px;
  line-height: 15px;
  white-space: nowrap;
}

.show {
  margin-left: 5px;
}
```
